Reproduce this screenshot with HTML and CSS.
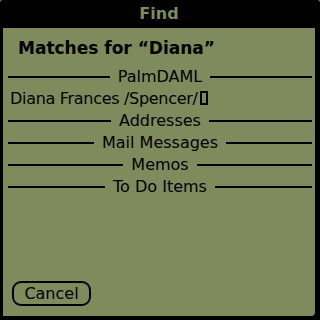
FILE: index.html
```html
<!DOCTYPE html>
<html lang="en">
<head>
  <meta charset="UTF-8"/>
  <title>Find</title>
  <link rel="stylesheet" href="styles.css">
</head>
<body>
  <div class="dialog">
    <div class="title">Find</div>
    <div class="panel">
      <h1>Matches for “Diana”</h1>
      <div class="results">
        <div class="sep"><span>PalmDAML</span></div>
        <div class="hit">Diana Frances /Spencer/<span class="box"></span></div>
        <div class="sep"><span>Addresses</span></div>
        <div class="sep"><span>Mail Messages</span></div>
        <div class="sep"><span>Memos</span></div>
        <div class="sep"><span>To Do Items</span></div>
      </div>
      <div class="buttons">
        <button class="btn">Cancel</button>
      </div>
    </div>
  </div>
</body>
</html>
```

FILE: styles.css
```css
* { box-sizing: border-box; margin: 0; padding: 0; }
:root { --lcd: #7f8b5d; --ink: #000; }
body {
  background: var(--lcd);
  font-family: 'DejaVu Sans', sans-serif;
  color: var(--ink);
}
.dialog {
  width: 320px; height: 320px;
  background: var(--ink);
  border-radius: 3px 3px 0 0;
  padding: 0 5px 4px 3px;
  display: flex; flex-direction: column;
}
.title {
  height: 28px; line-height: 28px;
  text-align: center;
  color: var(--lcd);
  font-weight: bold; font-size: 16px;
}
.panel {
  flex: 1;
  background: var(--lcd);
  border-radius: 0 0 4px 0;
  display: flex; flex-direction: column;
  padding: 0 3px 0 5px;
}
h1 {
  font-size: 17px; font-weight: bold;
  padding: 10px 0 0 10px;
  height: 38px;
}
.results { display: flex; flex-direction: column; }
.sep, .hit { height: 22px; line-height: 22px; font-size: 16px; }
.sep {
  display: flex; align-items: center; gap: 8px;
}
.sep::before, .sep::after {
  content: ''; flex: 1; height: 2px; background: var(--ink);
}
.hit { padding-left: 2px; letter-spacing: -0.3px; }
.box {
  display: inline-block; vertical-align: -1px;
  width: 8px; height: 14px; margin-left: 2px;
  border: 2px solid var(--ink);
}
.buttons { margin-top: auto; padding: 0 0 10px 4px; }
.btn {
  width: 79px; height: 25px;
  border: 2px solid var(--ink); border-radius: 9px;
  background: transparent;
  font-family: 'DejaVu Sans', sans-serif; font-size: 16px;
  color: var(--ink);
}
```
